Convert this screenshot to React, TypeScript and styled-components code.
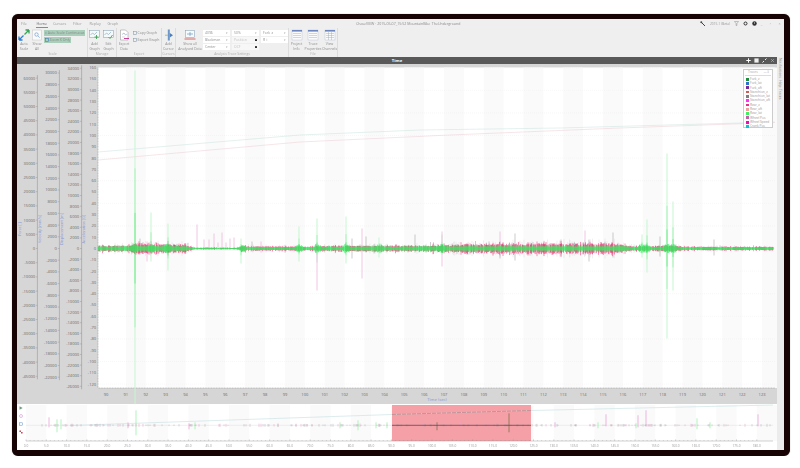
import styled, { createGlobalStyle } from "styled-components";

const GlobalStyle = createGlobalStyle`
  html, body {
    margin: 0;
    padding: 0;
    background: #fff;
    font-family: "Open Sans", "Liberation Sans", sans-serif;
  }
`;

const Frame = styled.div`
  box-sizing: content-box;
  width: 767px;
  height: 431px;
  margin: 14px 0 0 12px;
  border-style: solid;
  border-width: 5px 6px 6px 5px;
  border-color: #170303;
  border-radius: 6px;
  box-shadow: 0 0 1px #777;
  display: flex;
  flex-direction: column;
  overflow: hidden;
  background: #efefef;
  filter: blur(0.35px);
`;
const Ribbon = styled.div`
  height: 38px;
  background: #efefef;
  display: flex;
  flex-direction: column;
  color: #777;
`;
const TopRow = styled.div`
  height: 11px;
  display: flex;
  align-items: center;
  position: relative;
  font-size: 3.7px;
`;
const Tabs = styled.div`
  display: flex;
  gap: 3.8px;
`;
const Tab = styled.div<{ $active?: boolean }>`
  width: 14px;
  text-align: center;
  color: ${(props) => (props.$active ? "#666" : "#999")};
  position: relative;
  ${(props) =>
    props.$active &&
    `&::after {
      content: "";
      position: absolute;
      left: 1px;
      right: 1px;
      bottom: -1.5px;
      height: .7px;
      background: #5f9f85;
    }`}
`;
const WindowTitle = styled.div`
  margin-left: 236px;
  font-size: 3.55px;
  color: #8a8a8a;
  white-space: nowrap;
`;
const Status = styled.div`
  margin-left: auto;
  display: flex;
  align-items: center;
  color: #999;
  gap: 4px;
  font-size: 3.3px;
`;
const WindowButtons = styled.div`
  display: flex;
  margin-left: -4px;
`;
const WindowButton = styled.span`
  width: 9px;
  text-align: center;
  font-size: 3.8px;
  color: #aaa;
`;
const Groups = styled.div`
  flex: 1;
  display: flex;
  padding-left: 1px;
`;
const Group = styled.div<{ $width: number }>`
  width: ${(props) => props.$width}px;
  display: flex;
  flex-direction: column;
  border-right: 0.6px solid #dcdcdc;
  box-sizing: border-box;
`;
const GroupBody = styled.div`
  flex: 1;
  display: flex;
  gap: 1px;
  padding-top: 0.5px;
`;
const GroupLabel = styled.div`
  height: 6px;
  line-height: 6px;
  font-size: 3.4px;
  text-align: center;
  color: #b0b0b0;
`;
const BigButton = styled.div<{ $width?: number; $inset?: number }>`
  width: ${(props) => props.$width ?? 13}px;
  margin-left: ${(props) => props.$inset ?? 0}px;
  display: flex;
  flex-direction: column;
  align-items: center;
  font-size: 3.5px;
  line-height: 4.3px;
  text-align: center;
  white-space: nowrap;
  color: #8f8f8f;
  svg {
    display: block;
    margin-bottom: 1.5px;
  }
`;
const SmallStack = styled.div`
  display: flex;
  flex-direction: column;
  gap: 1px;
  padding-top: 1px;
`;
const SmallButton = styled.div<{ $on?: boolean; $width?: number }>`
  height: 6px;
  width: ${(props) => (props.$width ? `${props.$width}px` : "auto")};
  display: flex;
  align-items: center;
  gap: 1px;
  font-size: 3.5px;
  white-space: nowrap;
  padding-left: 0.5px;
  color: #8a8a8a;
  background: ${(props) => (props.$on ? "#a9ceb9" : "transparent")};
`;
const SelectGrid = styled.div`
  display: grid;
  grid-template-columns: repeat(3, 27px);
  grid-auto-rows: 6px;
  gap: 1px 2px;
  padding-top: 1px;
`;
const SelectBox = styled.div<{ $off?: boolean }>`
  background: ${(props) => (props.$off ? "#f7f7f7" : "#fff")};
  color: ${(props) => (props.$off ? "#c4c4c4" : "#909090")};
  font-size: 3.4px;
  display: flex;
  align-items: center;
  justify-content: space-between;
  padding: 0 2px;
`;
const Caret = styled.span`
  color: #aaa;
  font-size: 3px;
`;
const Lock = styled.span`
  width: 2.4px;
  height: 2.4px;
  background: #333;
  border-radius: 0.6px;
`;
const Body = styled.div`
  flex: 1;
  display: flex;
  min-height: 0;
`;
const Main = styled.div`
  width: 760px;
  display: flex;
  flex-direction: column;
`;
const PaneHeader = styled.div`
  height: 7px;
  background: #595959;
  color: #fff;
  display: flex;
  align-items: center;
  justify-content: center;
  position: relative;
  font-size: 4.2px;
  font-weight: 700;
`;
const PaneIcons = styled.div`
  position: absolute;
  right: 2px;
  top: 1px;
  display: flex;
  gap: 3px;
  align-items: center;
`;
const ChartArea = styled.div`
  height: 340px;
  background: #d6d6d6;
  position: relative;
  svg {
    display: block;
  }
`;
const Legend = styled.div`
  position: absolute;
  top: 4.5px;
  right: 4px;
  width: 30px;
  height: 59px;
  background: #fff;
  border: 0.5px solid #ccc;
  box-sizing: border-box;
  padding: 0.5px 1px;
  font-size: 3.2px;
  line-height: 4.3px;
  color: #999;
`;
const LegendHead = styled.div`
  height: 5px;
  display: flex;
  align-items: center;
  justify-content: space-between;
  padding: 0 1.5px 0 3px;
  border-bottom: 0.5px solid #ddd;
  margin-bottom: 1px;
  color: #aaa;
`;
const LegendRow = styled.div`
  height: 4.3px;
  display: flex;
  align-items: center;
  gap: 1.2px;
  padding-left: 1px;
  white-space: nowrap;
`;
const Swatch = styled.span<{ $color: string }>`
  width: 2.8px;
  height: 2.8px;
  background: ${(props) => props.$color};
`;
const Overview = styled.div`
  height: 46px;
  background: #fff;
  display: flex;
  svg {
    display: block;
  }
`;
const OverviewTools = styled.div`
  width: 7px;
  padding-top: 2px;
  display: flex;
  flex-direction: column;
  align-items: center;
  gap: 4px;
`;
const SideStrip = styled.div`
  flex: 1;
  background: #ececec;
  display: flex;
  flex-direction: column;
  align-items: center;
  padding-top: 1px;
  gap: 2px;
`;
const SideTab = styled.div`
  writing-mode: vertical-rl;
  font-size: 3.4px;
  color: #888;
  line-height: 5px;
  white-space: nowrap;
`;

const random = (seed: number) => () => {
  seed = (seed + 0x6d2b79f5) | 0;
  let t = Math.imul(seed ^ (seed >>> 15), 1 | seed);
  t = (t + Math.imul(t ^ (t >>> 7), 61 | t)) ^ t;
  return ((t ^ (t >>> 14)) >>> 0) / 4294967296;
};

const CY = 248.5;

// envelope of the noise around zero, by screen x
const ENVELOPE: [number, number][] = [
  [98, 2.4], [130, 2.6], [136, 5], [150, 3.5], [185, 3.2], [195, 0.7], [238, 0.6],
  [242, 2], [290, 1.6], [330, 2.2], [400, 2.4], [440, 2.6], [465, 3.6], [560, 4.2],
  [615, 4.4], [630, 2], [680, 2.2], [690, 1.4], [773, 1.4],
];
const envelope = (x: number) => {
  for (let i = 1; i < ENVELOPE.length; i++) {
    const [x0, a0] = ENVELOPE[i - 1];
    const [x1, a1] = ENVELOPE[i];
    if (x <= x1) return a0 + ((a1 - a0) * (x - x0)) / (x1 - x0);
  }
  return 1.4;
};

interface ISpike {
  x: number;
  up: number;
  down: number;
  kind: "green" | "pink" | "dark";
}
const SPIKES: ISpike[] = [
  { x: 135, up: 178, down: 175, kind: "green" },
  { x: 151, up: 36, down: 13, kind: "green" },
  { x: 168, up: 25, down: 22, kind: "green" },
  { x: 147, up: 7, down: 13, kind: "pink" },
  { x: 197, up: 24, down: 1, kind: "pink" },
  { x: 204, up: 9, down: 1, kind: "pink" },
  { x: 209, up: 9, down: 1, kind: "pink" },
  { x: 214, up: 15, down: 1, kind: "pink" },
  { x: 218, up: 6, down: 1, kind: "pink" },
  { x: 222, up: 16, down: 1, kind: "pink" },
  { x: 226, up: 6, down: 1, kind: "pink" },
  { x: 230, up: 10, down: 1, kind: "pink" },
  { x: 234, up: 11, down: 1, kind: "pink" },
  { x: 241, up: 10, down: 15, kind: "green" },
  { x: 252, up: 7, down: 3, kind: "dark" },
  { x: 261, up: 7, down: 4, kind: "pink" },
  { x: 299, up: 22, down: 13, kind: "green" },
  { x: 317, up: 30, down: 14, kind: "green" },
  { x: 317, up: 5, down: 42, kind: "pink" },
  { x: 346, up: 32, down: 15, kind: "green" },
  { x: 352, up: 10, down: 10, kind: "dark" },
  { x: 362, up: 20, down: 30, kind: "pink" },
  { x: 366, up: 12, down: 4, kind: "dark" },
  { x: 379, up: 11, down: 9, kind: "green" },
  { x: 415, up: 14, down: 4, kind: "dark" },
  { x: 442, up: 17, down: 18, kind: "pink" },
  { x: 442, up: 14, down: 6, kind: "green" },
  { x: 500, up: 17, down: 8, kind: "pink" },
  { x: 500, up: 7, down: 10, kind: "dark" },
  { x: 515, up: 15, down: 12, kind: "dark" },
  { x: 561, up: 9, down: 7, kind: "dark" },
  { x: 585, up: 18, down: 7, kind: "pink" },
  { x: 589, up: 9, down: 13, kind: "dark" },
  { x: 613, up: 16, down: 9, kind: "dark" },
  { x: 642, up: 14, down: 9, kind: "green" },
  { x: 647, up: 29, down: 24, kind: "green" },
  { x: 660, up: 12, down: 8, kind: "dark" },
  { x: 667, up: 95, down: 90, kind: "green" },
  { x: 673, up: 47, down: 42, kind: "green" },
  { x: 714, up: 9, down: 7, kind: "dark" },
];

const buildTraces = () => {
  const r = random(91);
  let green = "";
  let pink = "";
  let dark = "";
  let pale = "";
  for (let x = 98; x <= 773; x += 0.5) {
    const a = envelope(x);
    const near = SPIKES.reduce(
      (m, s) => (s.kind === "green" && Math.abs(x - s.x) < 4 ? Math.max(m, 2 - Math.abs(x - s.x) / 3) : m),
      0
    );
    const g = Math.min(a * 0.9, 2.3) * (0.72 + r() * 0.28) + near * r() * 1.8;
    green += `M${x} ${(CY - g).toFixed(1)}V${(CY + g).toFixed(1)}`;
    if (r() < 0.75) {
      const burst = r() < 0.1 ? 1.5 : 1;
      const p = a * (0.75 + r() * 0.5) * burst;
      pink += `M${x} ${(CY - p).toFixed(1)}V${(CY + p * (0.8 + r() * 0.5)).toFixed(1)}`;
    }
    if (r() < 0.14) {
      const d = a * (0.9 + r() * 0.7) * (r() < 0.12 ? 1.6 : 1);
      dark += `M${x} ${(CY - d).toFixed(1)}V${(CY + d * r() * 1.2).toFixed(1)}`;
    }
    if (r() < 0.14) {
      const q = a * (1.3 + r() * 1);
      pale += `M${x} ${(CY - q).toFixed(1)}V${(CY + q).toFixed(1)}`;
    }
  }
  return { green, pink, dark, pale };
};
const traces = buildTraces();

const spikePath = (list: ISpike[], cy: number, k: number) =>
  list.map((s) => `M${s.x.toFixed(1)} ${(cy - s.up * k).toFixed(1)}V${(cy + s.down * k).toFixed(1)}`).join("");

const range = (from: number, to: number, step: number) => {
  const out: number[] = [];
  for (let v = from; v >= to; v -= step) out.push(v);
  return out;
};

const yTicks = range(160, -120, 10);
const X0 = 106;
const XSTEP = 19.88;
const seconds = range(123, 90, 1).reverse();

interface IAxisProps {
  line: number;
  labelX: number;
  values: number[];
  pxPerUnit: number;
  title: string;
  titleX: number;
}
const AXIS_TEXT = "#6a6a6a";
const AXIS_TITLE = "#8398d6";

function Axis({ line, labelX, values, pxPerUnit, title, titleX }: IAxisProps) {
  const top = CY - values[0] * pxPerUnit - 3;
  const bottom = CY - values[values.length - 1] * pxPerUnit + 3;
  return (
    <g>
      <path d={`M${line} ${top}V${bottom}`} stroke="#8c8c8c" strokeWidth={0.5} />
      {values.map((v) => {
        const y = CY - v * pxPerUnit;
        return (
          <g key={v}>
            <path d={`M${line - 1.6} ${y}H${line}`} stroke="#8c8c8c" strokeWidth={0.4} />
            <text x={labelX} y={y + 1.4} fontSize={4} textAnchor="end" fill={AXIS_TEXT}>
              {v}
            </text>
          </g>
        );
      })}
      <text
        transform={`translate(${titleX} 229) rotate(-90)`}
        fontSize={3.9}
        textAnchor="middle"
        fill={AXIS_TITLE}
      >
        {title}
      </text>
    </g>
  );
}

function Chart() {
  return (
    <svg width={760} height={340} viewBox="17 64 760 340" fontFamily="'Open Sans', sans-serif">
      <rect x={98} y={67.5} width={677} height={320.5} fill="#fff" />
      {range(32, 0, 2).map((i) => (
        <rect key={i} x={X0 + XSTEP * (i + 1)} y={67.5} width={XSTEP} height={320.5} fill="#fafafa" />
      ))}
      {yTicks
        .filter((v) => v % 20 === 0)
        .map((v) => (
          <path
            key={v}
            d={`M98 ${CY - v * 1.13}H775`}
            stroke="#efefef"
            strokeWidth={0.5}
            strokeDasharray="1 1"
          />
        ))}
      <path d="M98 67.5V388H775" fill="none" stroke="#8a8a8a" strokeWidth={0.5} strokeDasharray="1 .6" />

      <path d="M98 152L300 135L420 130L560 128L775 122" fill="none" stroke="#c8e2df" strokeWidth={0.5} />
      <path d="M98 160L300 142L450 135L620 128L775 122.5" fill="none" stroke="#ecccd2" strokeWidth={0.5} />

      <path d={spikePath(SPIKES.filter((s) => s.kind === "green"), CY, 1)} stroke="#c4f7ce" strokeWidth={1} fill="none" />
      <path d={spikePath(SPIKES.filter((s) => s.kind === "green"), CY, 0.45)} stroke="#9ff2b0" strokeWidth={0.8} fill="none" />
      <path d={spikePath(SPIKES.filter((s) => s.kind === "green"), CY, 0.2)} stroke="#6fec88" strokeWidth={0.8} fill="none" />
      <path d={spikePath(SPIKES.filter((s) => s.kind === "pink"), CY, 1)} stroke="#efb6dd" strokeWidth={0.8} fill="none" />
      <path d={spikePath(SPIKES.filter((s) => s.kind === "dark"), CY, 1)} stroke="#a8a8a8" strokeWidth={0.6} fill="none" />
      <path d={traces.pale} stroke="#dcd6da" strokeWidth={0.4} fill="none" />
      <path d={traces.dark} stroke="#808080" strokeWidth={0.4} fill="none" />
      <path d={traces.pink} stroke="#e5286a" strokeWidth={0.5} fill="none" />
      <path d={traces.green} stroke="#2cf05c" strokeWidth={0.6} fill="none" />

      {yTicks.map((v) => (
        <text key={v} x={96} y={CY - v * 1.13 + 1.4} fontSize={4} textAnchor="end" fill={AXIS_TEXT}>
          {v}
        </text>
      ))}
      <Axis line={81.6} labelX={79} values={range(34000, -26000, 2000)} pxPerUnit={10.6 / 2000} title="Acceleration [G]" titleX={84.5} />
      <Axis line={59.4} labelX={56.7} values={range(30000, -22000, 2000)} pxPerUnit={11.7 / 2000} title="Displacement [m]" titleX={62.5} />
      <Axis line={37.4} labelX={35} values={range(60000, -45000, 5000)} pxPerUnit={14.2 / 5000} title="Velocity [mm/s]" titleX={40.5} />
      <text transform="translate(20.5 229) rotate(-90)" fontSize={3.6} textAnchor="middle" fill={AXIS_TITLE}>
        Force [ ]
      </text>

      {seconds.map((s, i) => (
        <text key={s} x={X0 + XSTEP * i} y={395.5} fontSize={4} textAnchor="middle" fill={AXIS_TEXT}>
          {s}
        </text>
      ))}
      <text x={437} y={400.5} fontSize={4.2} textAnchor="middle" fill={AXIS_TITLE}>
        Time (sec)
      </text>
    </svg>
  );
}

const OVERVIEW_SPIKES: ISpike[] = [
  { x: 49, up: 8, down: 2, kind: "pink" },
  { x: 57, up: 6, down: 7, kind: "green" },
  { x: 61, up: 6, down: 4, kind: "green" },
  { x: 136, up: 15, down: 10, kind: "green" },
  { x: 128, up: 3, down: 3, kind: "pink" },
  { x: 189, up: 2, down: 4, kind: "pink" },
  { x: 195, up: 3, down: 4, kind: "green" },
  { x: 340, up: 3, down: 3, kind: "green" },
  { x: 358, up: 5, down: 5, kind: "green" },
  { x: 376, up: 3, down: 3, kind: "green" },
  { x: 387, up: 3, down: 3, kind: "green" },
  { x: 437, up: 3, down: 5, kind: "dark" },
  { x: 460, up: 3, down: 1, kind: "pink" },
  { x: 509, up: 12, down: 7, kind: "dark" },
  { x: 555, up: 3, down: 2, kind: "pink" },
  { x: 598, up: 3, down: 3, kind: "green" },
  { x: 606, up: 11, down: 1, kind: "pink" },
  { x: 638, up: 10, down: 2, kind: "pink" },
  { x: 646, up: 15, down: 1, kind: "pink" },
  { x: 636, up: 2, down: 3, kind: "green" },
  { x: 697, up: 7, down: 4, kind: "green" },
  { x: 710, up: 3, down: 3, kind: "green" },
  { x: 758, up: 11, down: 1, kind: "pink" },
];

const buildOverview = () => {
  const r = random(17);
  let base = "";
  let colored = "";
  for (let x = 40; x <= 772; x += 1) {
    if (r() < 0.2) {
      const a = 0.5 + r() * 1;
      base += `M${x} ${(425.3 - a).toFixed(1)}V${(425.3 + a).toFixed(1)}`;
    }
    if (r() < 0.1) {
      const c = 0.6 + r() * 1.2;
      colored += `M${x} ${(425.3 - c).toFixed(1)}V${(425.3 + c).toFixed(1)}`;
    }
  }
  return { base, colored };
};
const overview = buildOverview();
const OX = (t: number) => 26 + t * 4.06;

function OverviewChart() {
  const marks = range(180, 0, 5).reverse();
  return (
    <svg width={753} height={46} viewBox="24 404 753 46" fontFamily="'Open Sans', sans-serif">
      {marks.filter((_, i) => i % 2 === 0).map((t) => (
        <rect key={t} x={OX(t)} y={405} width={20.3} height={36} fill="#fafafa" />
      ))}
      <rect x={392} y={405} width={139} height={36} fill="#f4a0a6" />
      <path d="M70 425.5L392 414.5L531 410.5L773 405" fill="none" stroke="#c4dfe0" strokeWidth={0.6} />
      <path d="M392 414.5L531 410.5" fill="none" stroke="#b85a62" strokeWidth={0.5} strokeDasharray="4 1" />
      <path d="M26 425.3H773" stroke="#dadae0" strokeWidth={0.4} />
      <path d={spikePath(OVERVIEW_SPIKES.filter((s) => s.kind === "green"), 425.3, 1)} stroke="#9df0ac" strokeWidth={0.8} fill="none" />
      <path d={spikePath(OVERVIEW_SPIKES.filter((s) => s.kind === "pink"), 425.3, 1)} stroke="#e9a4d7" strokeWidth={0.8} fill="none" />
      <path d={spikePath(OVERVIEW_SPIKES.filter((s) => s.kind === "dark"), 425.3, 1)} stroke="#776a3f" strokeWidth={0.7} fill="none" />
      <path d={overview.colored} stroke="#dc9cc2" strokeWidth={0.5} fill="none" />
      <path d={overview.base} stroke="#a09aa0" strokeWidth={0.4} fill="none" />
      <path d="M392 425.3H531" stroke="#5d2a30" strokeWidth={0.7} />
      <path d="M26 441H773" stroke="#8a8a8a" strokeWidth={0.4} />
      {range(180, 0, 1).map((t) => (
        <path key={t} d={`M${OX(t)} 441v${t % 5 === 0 ? -1.6 : -0.8}`} stroke="#8a8a8a" strokeWidth={0.35} />
      ))}
      {marks.map((t) => (
        <text key={t} x={OX(t)} y={447.2} fontSize={3.2} textAnchor="middle" fill="#999">
          {t.toFixed(1)}
        </text>
      ))}
    </svg>
  );
}

const LEGEND: [string, string][] = [
  ["Fork_z", "#1f8a3a"],
  ["Fork_lat", "#2f6fd0"],
  ["Fork_aft", "#7a2a96"],
  ["Stanchion_z", "#c8605a"],
  ["Stanchion_lat", "#7e7e7e"],
  ["Stanchion_aft", "#ff30f0"],
  ["Rear_z", "#e0308a"],
  ["Rear_aft", "#f0a0a0"],
  ["Rear_lat", "#40f060"],
  ["Wheel Pos", "#c060a8"],
  ["Wheel Speed", "#ea10b0"],
  ["Crank Pos", "#10c0d0"],
];

function ScaleIcon() {
  return (
    <svg width={12} height={12} viewBox="0 0 12 12">
      <path d="M1 11L5.5 6.5M1 11V7.5M1 11H4.5" stroke="#2f7fd0" strokeWidth={1.3} fill="none" />
      <path d="M11 1L6.5 5.5M11 1V4.5M11 1H7.5" stroke="#3aa35a" strokeWidth={1.3} fill="none" />
    </svg>
  );
}
function ShowAllIcon() {
  return (
    <svg width={12} height={12} viewBox="0 0 12 12">
      <rect x={1.5} y={1} width={9} height={10} fill="#fafafa" stroke="#c4c4c4" strokeWidth={0.5} />
      <circle cx={5.5} cy={5.5} r={1.7} fill="none" stroke="#5a8fc8" strokeWidth={0.6} />
      <path d="M7 7L8.7 8.7" stroke="#5a8fc8" strokeWidth={0.6} />
    </svg>
  );
}
function GraphIcon({ tick }: { tick?: boolean }) {
  return (
    <svg width={11} height={12} viewBox="0 0 11 12">
      <rect x={0.5} y={1.5} width={10} height={7} fill="#f4f9fa" stroke="#7f9bb0" strokeWidth={0.5} />
      <path d="M1.5 6L3.5 4L5.5 5.5L8 3" stroke="#6a8fb0" strokeWidth={0.5} fill="none" />
      <path d={tick ? "M5.5 8L7 9.5L9.5 6" : "M7.5 6V10M5.5 8H9.5"} stroke="#43a35c" strokeWidth={0.9} fill="none" />
    </svg>
  );
}
function ExportIcon() {
  return (
    <svg width={11} height={12} viewBox="0 0 11 12">
      <path d="M1.5 1H6.5L9 3.5V11H1.5Z" fill="#fff" stroke="#8c8c8c" strokeWidth={0.5} />
      <path d="M3 5.5L5 4L6.5 6L8 5" stroke="#6a8fb0" strokeWidth={0.5} fill="none" />
      <path d="M5 9.5H10" stroke="#c0308a" strokeWidth={0.9} />
      <path d="M3 8H6" stroke="#b0b0b0" strokeWidth={0.5} />
    </svg>
  );
}
function CursorIcon() {
  return (
    <svg width={10} height={12} viewBox="0 0 10 12">
      <rect x={3.8} y={0.5} width={2} height={11} fill="#6f96c8" />
      <path d="M5.8 4L9 6.2L5.8 8.4Z" fill="#4f7fb8" />
      <path d="M3.8 6.2H1" stroke="#b0a040" strokeWidth={0.7} />
    </svg>
  );
}
function AnalysisIcon() {
  return (
    <svg width={12} height={12} viewBox="0 0 12 12">
      <rect x={1.5} y={1.5} width={9} height={7} fill="#f6fafc" stroke="#7f9bb0" strokeWidth={0.5} />
      <path d="M3 5H9M6 3V7" stroke="#6a9ac0" strokeWidth={0.7} />
      <path d="M0.5 10H11.5" stroke="#cf4a4a" strokeWidth={0.8} />
    </svg>
  );
}
function TableIcon({ grid }: { grid?: boolean }) {
  return (
    <svg width={12} height={12} viewBox="0 0 12 12">
      <rect x={1} y={1} width={10} height={10} fill="#fbfbfb" stroke="#b9c4d6" strokeWidth={0.5} />
      <rect x={1} y={1} width={10} height={1.6} fill="#6d86c0" />
      <path d="M2 4.5H10M2 6.5H10M2 8.5H10" stroke="#a9b1bf" strokeWidth={0.5} />
      {grid && <path d="M4.5 3V11M7.5 3V11" stroke="#a9b1bf" strokeWidth={0.5} />}
    </svg>
  );
}
function Tiny({ kind }: { kind: "blue" | "gray" }) {
  return (
    <svg width={4} height={4} viewBox="0 0 4 4">
      <rect
        x={0.4}
        y={0.4}
        width={3.2}
        height={3.2}
        fill="none"
        stroke={kind === "blue" ? "#3f7fc0" : "#8aa0b0"}
        strokeWidth={0.6}
      />
    </svg>
  );
}

export default function App() {
  return (
    <>
      <GlobalStyle />
      <Frame>
        <Ribbon>
          <TopRow>
            <Tabs>
              <Tab>File</Tab>
              <Tab $active>Home</Tab>
              <Tab>Cursors</Tab>
              <Tab>Filter</Tab>
              <Tab>Replay</Tab>
              <Tab>Graph</Tab>
            </Tabs>
            <WindowTitle>ChaseVIEW · 2015-05-07_15:52 MountainBike_TheUnderground</WindowTitle>
            <Status>
              <svg width={6} height={6} viewBox="0 0 6 6">
                <path d="M1 1L5 5" stroke="#444" strokeWidth={1} />
                <circle cx={1.3} cy={1.3} r={1} fill="#444" />
              </svg>
              <span>2015.1 (Beta)</span>
              <svg width={5} height={5} viewBox="0 0 5 5">
                <path d="M.5 .5H4.5L2.9 2.6V4.5H2.1V2.6Z" fill="none" stroke="#777" strokeWidth={0.4} />
              </svg>
              <svg width={5} height={5} viewBox="0 0 5 5">
                <circle cx={2.5} cy={2.5} r={1.5} fill="none" stroke="#333" strokeWidth={1} />
              </svg>
              <svg width={5} height={5} viewBox="0 0 5 5">
                <circle cx={2.5} cy={2.5} r={2.2} fill="#333" />
                <path d="M2.5 1.2V2.8" stroke="#eee" strokeWidth={0.6} />
              </svg>
              <WindowButtons>
                <WindowButton>_</WindowButton>
                <WindowButton>▫</WindowButton>
                <WindowButton>×</WindowButton>
              </WindowButtons>
            </Status>
          </TopRow>
          <Groups>
            <Group $width={70}>
              <GroupBody>
                <BigButton $width={12}>
                  <ScaleIcon />
                  Auto
                  <br />
                  Scale
                </BigButton>
                <BigButton $width={12}>
                  <ShowAllIcon />
                  Show
                  <br />
                  All
                </BigButton>
                <SmallStack>
                  <SmallButton $on $width={40}>
                    <Tiny kind="gray" />
                    Auto Scale Continuous
                  </SmallButton>
                  <SmallButton $on $width={26}>
                    <Tiny kind="blue" />
                    Zoom X Only
                  </SmallButton>
                </SmallStack>
              </GroupBody>
              <GroupLabel>Scale</GroupLabel>
            </Group>
            <Group $width={29}>
              <GroupBody>
                <BigButton>
                  <GraphIcon />
                  Add
                  <br />
                  Graph
                </BigButton>
                <BigButton>
                  <GraphIcon tick />
                  Edit
                  <br />
                  Graph
                </BigButton>
              </GroupBody>
              <GroupLabel>Manage</GroupLabel>
            </Group>
            <Group $width={45}>
              <GroupBody>
                <BigButton $width={14}>
                  <ExportIcon />
                  Export
                  <br />
                  Data
                </BigButton>
                <SmallStack>
                  <SmallButton>
                    <Tiny kind="gray" />
                    Copy Graph
                  </SmallButton>
                  <SmallButton>
                    <Tiny kind="gray" />
                    Export Graph
                  </SmallButton>
                </SmallStack>
              </GroupBody>
              <GroupLabel>Export</GroupLabel>
            </Group>
            <Group $width={14}>
              <GroupBody>
                <BigButton>
                  <CursorIcon />
                  Add
                  <br />
                  Cursor
                </BigButton>
              </GroupBody>
              <GroupLabel>Cursors</GroupLabel>
            </Group>
            <Group $width={113}>
              <GroupBody>
                <BigButton $width={24} $inset={2}>
                  <AnalysisIcon />
                  Show all
                  <br />
                  Analysed Data
                </BigButton>
                <SelectGrid>
                  <SelectBox>
                    4096<Caret>▾</Caret>
                  </SelectBox>
                  <SelectBox>
                    50%<Caret>▾</Caret>
                  </SelectBox>
                  <SelectBox>
                    Fork_z<Caret>▾</Caret>
                  </SelectBox>
                  <SelectBox>
                    Blackman<Caret>▾</Caret>
                  </SelectBox>
                  <SelectBox $off>
                    Position<Lock />
                  </SelectBox>
                  <SelectBox>
                    R_i<Caret>▾</Caret>
                  </SelectBox>
                  <SelectBox>
                    Center<Caret>▾</Caret>
                  </SelectBox>
                  <SelectBox $off>
                    OCF<Lock />
                  </SelectBox>
                </SelectGrid>
              </GroupBody>
              <GroupLabel>Analysis Trace Settings</GroupLabel>
            </Group>
            <Group $width={49}>
              <GroupBody>
                <BigButton $width={15}>
                  <TableIcon />
                  Project
                  <br />
                  Info
                </BigButton>
                <BigButton $width={16}>
                  <TableIcon />
                  Trace
                  <br />
                  Properties
                </BigButton>
                <BigButton $width={15}>
                  <TableIcon grid />
                  View
                  <br />
                  Channels
                </BigButton>
              </GroupBody>
              <GroupLabel>File</GroupLabel>
            </Group>
          </Groups>
        </Ribbon>
        <Body>
          <Main>
            <PaneHeader>
              Time
              <PaneIcons>
                <svg width={5} height={5} viewBox="0 0 5 5">
                  <path d="M2.5 .3V4.7M.3 2.5H4.7" stroke="#fff" strokeWidth={1} />
                </svg>
                <svg width={5} height={5} viewBox="0 0 5 5">
                  <rect x={0.4} y={0.4} width={4.2} height={4.2} fill="#eee" />
                </svg>
                <svg width={5} height={5} viewBox="0 0 5 5">
                  <path d="M.5 4.5L2 3M4.5 .5L3 2" stroke="#fff" strokeWidth={0.9} />
                </svg>
                <svg width={5} height={5} viewBox="0 0 5 5">
                  <path d="M1 1L4 4M4 1L1 4" stroke="#ccc" strokeWidth={0.5} />
                </svg>
              </PaneIcons>
            </PaneHeader>
            <ChartArea>
              <Chart />
              <Legend>
                <LegendHead>
                  <span>Traces</span>
                  <span>— ⊼</span>
                </LegendHead>
                {LEGEND.map(([name, color]) => (
                  <LegendRow key={name}>
                    <Swatch $color={color} />
                    {name}
                  </LegendRow>
                ))}
              </Legend>
            </ChartArea>
            <Overview>
              <OverviewTools>
                <svg width={4} height={4} viewBox="0 0 4 4">
                  <path d="M.5 .3L3.7 2L.5 3.7Z" fill="#6f9f80" />
                </svg>
                <svg width={4} height={4} viewBox="0 0 4 4">
                  <circle cx={2} cy={2} r={1.5} fill="none" stroke="#c880c8" strokeWidth={0.5} />
                </svg>
                <svg width={4} height={4} viewBox="0 0 4 4">
                  <rect x={0.4} y={0.8} width={3.2} height={2.4} fill="none" stroke="#5f8fc0" strokeWidth={0.5} />
                </svg>
                <svg width={4} height={4} viewBox="0 0 4 4">
                  <path d="M.4 .4H2V2H.4ZM2 2H3.6V3.6H2Z" fill="#c84a5a" />
                </svg>
              </OverviewTools>
              <OverviewChart />
            </Overview>
          </Main>
          <SideStrip>
            <SideTab>Notifications</SideTab>
            <SideTab>Help</SideTab>
            <SideTab>Traces</SideTab>
          </SideStrip>
        </Body>
      </Frame>
    </>
  );
}
